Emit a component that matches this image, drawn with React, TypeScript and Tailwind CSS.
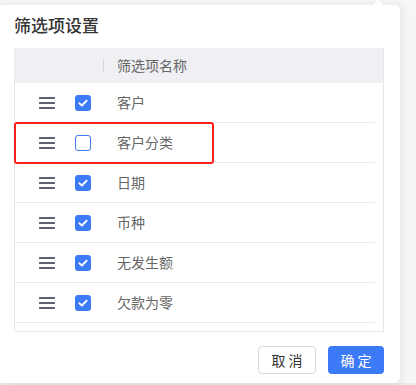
import React from "react";

const rows = [
  { label: "客户", checked: true },
  { label: "客户分类", checked: false },
  { label: "日期", checked: true },
  { label: "币种", checked: true },
  { label: "无发生额", checked: true },
  { label: "欠款为零", checked: true },
];

function DragHandle() {
  return (
    <svg width="16" height="12" viewBox="0 0 16 12" className="shrink-0">
      <rect x="0" y="0" width="16" height="2" rx="0.5" fill="#5c6270" />
      <rect x="0" y="5" width="16" height="2" rx="0.5" fill="#5c6270" />
      <rect x="0" y="10" width="16" height="2" rx="0.5" fill="#5c6270" />
    </svg>
  );
}

function Check({ checked }: { checked: boolean }) {
  if (!checked) {
    return <div className="h-4 w-4 shrink-0 rounded-[3px] border border-[#3d7bf7] bg-white" />;
  }
  return (
    <div className="grid h-4 w-4 shrink-0 place-items-center rounded-[3px] bg-[#3d7bf7]">
      <svg width="10" height="8" viewBox="0 0 10 8">
        <path d="M1.3 4.1 L3.9 6.5 L8.7 1.6" fill="none" stroke="#fff" strokeWidth="1.8" strokeLinecap="round" strokeLinejoin="round" />
      </svg>
    </div>
  );
}

export default function App() {
  return (
    <div
      className="relative h-[385px] w-[416px] overflow-hidden bg-[#f6f6f6]"
      style={{ fontFamily: '"Noto Sans CJK SC", "Noto Sans", sans-serif' }}
    >
      <div className="relative mt-[5px] h-[378px] w-[400px] rounded-r-[6px] bg-white px-[14px] shadow-[2px_0_8px_rgba(0,0,0,0.08)]">
        {/* arrow */}
        <div className="absolute left-[374px] top-[-4px] h-[8px] w-[8px] rotate-45 rounded-[1px] bg-white" />

        <div className="pt-[8px] text-[17px] font-medium leading-[24px] text-[#333]">筛选项设置</div>

        <div className="mt-[11px] w-[370px] border-b border-l border-r border-[#e8e8e8]">
          <div className="flex h-[35px] items-center bg-[#efeff4]">
            <div className="ml-[88px] h-[14px] w-px bg-[#d6d6dc]" />
            <div className="ml-[13px] text-[14px] text-[#666]">筛选项名称</div>
          </div>
          <div className="h-[248px] overflow-hidden pr-[8px]">
            {rows.map((r) => (
              <div key={r.label} className="flex h-[40px] items-center border-b border-[#eaeaea] pl-[24px]">
                <DragHandle />
                <div className="ml-[20px]">
                  <Check checked={r.checked} />
                </div>
                <div className="ml-[26px] text-[14px] text-[#666]">{r.label}</div>
              </div>
            ))}
          </div>
        </div>

        <div className="mt-[14px] flex w-[370px] justify-end gap-[12px]">
          <button className="h-[28px] w-[58px] rounded-[4px] border border-[#d9d9d9] bg-white pl-[3px] text-[14px] tracking-[3px] text-[#333]">
            取消
          </button>
          <button className="h-[28px] w-[56px] rounded-[4px] bg-[#3c7af7] pl-[3px] text-[14px] tracking-[3px] text-white">
            确定
          </button>
        </div>
      </div>

      {/* highlight annotation */}
      <div className="absolute left-[14px] top-[122px] h-[42px] w-[200px] rounded-[3px] border-2 border-[#ff1f1f]" />

      <div className="h-[10px] bg-[#e9e9e9] pl-[176px] text-[12px] leading-[14px] text-[#555]">¥/xxxxxx</div>
    </div>
  );
}
